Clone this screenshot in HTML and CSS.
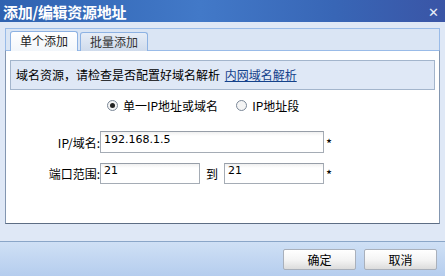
FILE: index.html
```html
<!DOCTYPE html>
<html lang="zh-CN">
<head>
  <meta charset="UTF-8" />
  <title>添加/编辑资源地址</title>
  <link rel="stylesheet" href="styles.css">
</head>
<body>
  <div class="window">
    <div class="titlebar">
      <span class="title">添加/编辑资源地址</span>
      <span class="close">&#x2715;</span>
    </div>

    <div class="content">
      <div class="tabstrip">
        <div class="tab active">单个添加</div>
        <div class="tab">批量添加</div>
      </div>

      <div class="panel">
        <div class="info">域名资源，请检查是否配置好域名解析 <a href="#">内网域名解析</a></div>

        <div class="radios">
          <label class="radio"><span class="dot checked"></span>单一IP地址或域名</label>
          <label class="radio"><span class="dot"></span>IP地址段</label>
        </div>

        <div class="row row-ip">
          <span class="label">IP/域名:</span>
          <input type="text" class="field wide" value="192.168.1.5" />
          <span class="req">*</span>
        </div>

        <div class="row row-port">
          <span class="label">端口范围:</span>
          <input type="text" class="field short" value="21" />
          <span class="to">到</span>
          <input type="text" class="field short" value="21" />
          <span class="req">*</span>
        </div>
      </div>
    </div>

    <div class="footer">
      <button class="btn">确定</button>
      <button class="btn">取消</button>
    </div>
  </div>
</body>
</html>
```

FILE: styles.css
```css
* {
  margin: 0;
  padding: 0;
  box-sizing: border-box;
}
body {
  width: 445px;
  height: 276px;
  overflow: hidden;
  background: #dfe8f6;
  font-family: "Noto Sans CJK SC", "DejaVu Sans", sans-serif;
  font-size: 12px;
  color: #000;
}
.window {
  display: flex;
  flex-direction: column;
  height: 276px;
}
.titlebar {
  height: 22px;
  display: flex;
  align-items: center;
  justify-content: space-between;
  padding: 0 6px 0 3px;
  background: linear-gradient(to right, #2f62b0 0%, #4279c8 45%, #3866b6 75%, #3a55a6 100%);
  color: #fff;
}
.title {
  font-size: 15px;
  font-weight: bold;
  letter-spacing: -0.3px;
}
.close {
  font-size: 13px;
  font-weight: bold;
  color: #e8eef8;
}
.content {
  padding: 6px 5px 0 5px;
}
.tabstrip {
  height: 22px;
  display: flex;
  align-items: flex-end;
  gap: 2px;
  padding-left: 4px;
  border: 1px solid #99bbe8;
  border-bottom: none;
  background: #dae5f4;
}
.tab {
  width: 68px;
  height: 19px;
  line-height: 17px;
  text-align: center;
  border: 1px solid #8db2e3;
  border-bottom: none;
  border-radius: 3px 3px 0 0;
  background: linear-gradient(#e6edf7, #cfdbec);
  color: #333;
  margin-bottom: -1px;
}
.tab.active {
  height: 20px;
  background: linear-gradient(#ffffff, #f2f6fb);
  color: #222;
}
.panel {
  height: 174px;
  background: #fff;
  border: 1px solid #8396b0;
  border-top-color: #99bbe8;
  border-bottom-color: #5d6d84;
  padding: 9px 4px 0 4px;
}
.info {
  height: 30px;
  line-height: 28px;
  padding-left: 5px;
  background: #dfe8f6;
  border: 1px solid #a3b5cc;
}
.info a {
  color: #15428b;
  margin-left: 2px;
}
.radios {
  display: flex;
  gap: 18px;
  padding-left: 97px;
  margin-top: 6px;
  height: 18px;
  align-items: center;
}
.radio {
  display: flex;
  align-items: center;
  gap: 5px;
}
.dot {
  width: 11px;
  height: 11px;
  border: 1px solid #7b8898;
  border-radius: 50%;
  background: #f4f4f4;
  position: relative;
}
.dot.checked::after {
  content: "";
  position: absolute;
  left: 2px;
  top: 2px;
  width: 5px;
  height: 5px;
  border-radius: 50%;
  background: #222;
}
.row {
  display: flex;
  align-items: center;
}
.row-ip {
  margin-top: 17px;
}
.row-port {
  margin-top: 9px;
}
.label {
  width: 90px;
  text-align: right;
}
.field {
  height: 22px;
  border: 1px solid #a5acb5;
  border-top-color: #979ea8;
  background: linear-gradient(#f0f0f0, #ffffff 4px);
  font-family: "DejaVu Sans", sans-serif;
  font-size: 11px;
  padding: 0 3px 6px;
  outline: none;
}
.wide {
  width: 224px;
}
.short {
  width: 100px;
  height: 21px;
}
.to {
  width: 24px;
  text-align: center;
}
.req {
  margin-left: 2px;
  padding-top: 3px;
  font-size: 13px;
}
.footer {
  margin-top: 17px;
  flex: 1;
  display: flex;
  justify-content: flex-end;
  align-items: flex-start;
  gap: 8px;
  padding: 7px 8px 0 0;
  border-top: 1px solid #8aa6c8;
  background: linear-gradient(#cfe0f5, #b5cdee);
}
.btn {
  width: 73px;
  height: 21px;
  font-family: "Noto Sans CJK SC", sans-serif;
  font-size: 12px;
  border: 1px solid #a9b0bb;
  border-radius: 2px;
  background: linear-gradient(#ffffff 0%, #f3f3f3 55%, #dcdcdc 100%);
  color: #000;
}
```
